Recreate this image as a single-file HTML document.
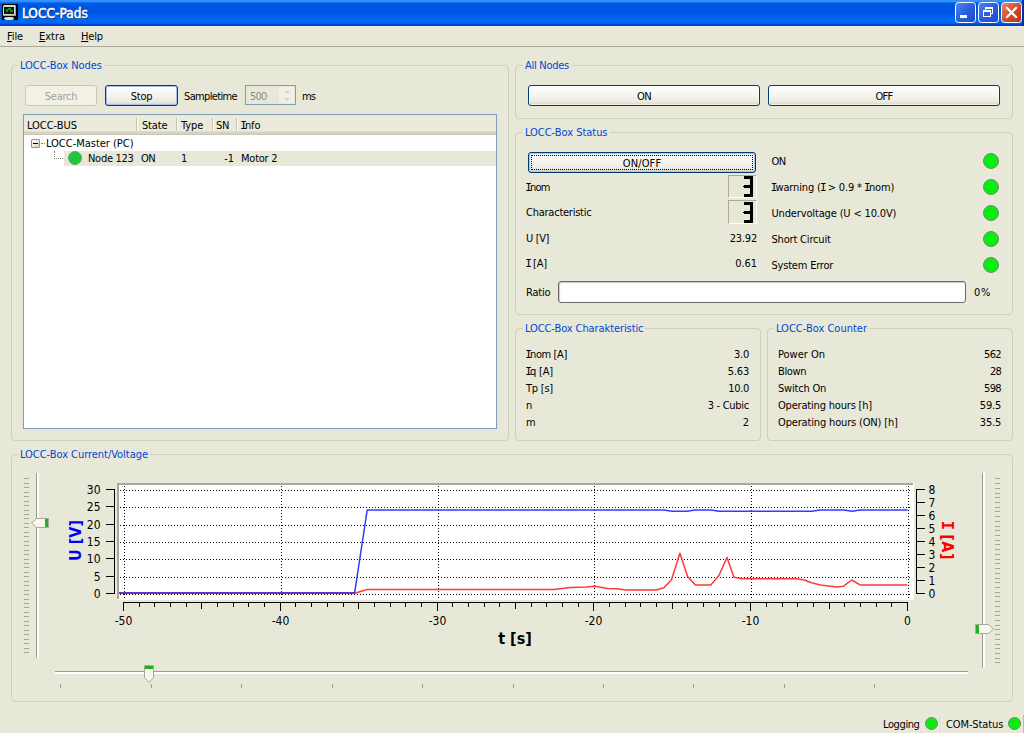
<!DOCTYPE html>
<html><head><meta charset="utf-8"><title>LOCC-Pads</title>
<style>
*{box-sizing:border-box;margin:0;padding:0}
html,body{width:1024px;height:733px;overflow:hidden}
body{background:#e8e8d8;font-family:"DejaVu Sans Condensed","DejaVu Sans","Liberation Sans",sans-serif;font-size:11px;color:#000;position:relative}
.t{position:absolute;white-space:nowrap;line-height:14px;font-size:11px}
.r{text-align:right}
#title{position:absolute;left:0;top:0;width:1024px;height:26px;background:linear-gradient(#3a8ff5 0,#3a8ff5 1.5px,#0070f5 2.5px,#0058e0 4px,#0054df 6px,#0054df 12px,#005cec 15px,#0068f5 19px,#0066f2 23px,#0048d8 24.5px,#0030c0 26px)}
#title .cap{position:absolute;left:22px;top:5px;font:13.5px "DejaVu Sans Condensed","DejaVu Sans","Liberation Sans",sans-serif;-webkit-text-stroke:0.5px #fff;color:#fff;text-shadow:1px 1px 0 #0a2a80;line-height:17px;white-space:nowrap}
.tb{position:absolute;top:2px;width:21px;height:21px;border:1px solid #fff;border-radius:3.5px;background:linear-gradient(135deg,#4f84ee,#2a5ee0 50%,#1c4cc8)}
.tb.x{background:linear-gradient(135deg,#ea8468,#d2492a 55%,#b83218)}
#menu{position:absolute;left:0;top:26px;width:1024px;height:21px;border-top:1px solid #f3f0dc;border-bottom:1px solid #aca899}
.gb{position:absolute;border:1px solid #d0d0bf;border-radius:4px}
.gl{position:absolute;background:#e8e8d8;color:#0046d5;padding:0 2px;white-space:nowrap;font-size:11px;line-height:14px}
.btn{position:absolute;border:1px solid #003c74;border-radius:3px;background:linear-gradient(#fff,#f4f3ee 50%,#ebe8dc 85%,#d6d0c5);font-size:11px;line-height:14px;box-shadow:inset 0 0 0 1px rgba(255,255,255,.6)}
.btn span{position:absolute;left:0;right:0;top:4px;text-align:center;white-space:nowrap}
.btn.dis{border-color:#c9c7ba;color:#a3a196;background:#f3f1e6;box-shadow:none}
.btn.def{box-shadow:inset 0 0 0 1px #a8c0f0}
.led{position:absolute;width:16px;height:16px;border-radius:50%;background:#08ee10;border:1px solid #6f8a62}
</style></head><body>
<div id="title"><div style="position:absolute;left:2px;top:4px;width:16px;height:16px;background:#000"></div><div style="position:absolute;left:3px;top:5px;width:13px;height:11px;background:#d8d8c8;border-radius:1.5px;box-shadow:inset -1px -1px 0 #a8a898"></div><div style="position:absolute;left:4px;top:7px;width:10px;height:7px;background:#04200a"></div><div style="position:absolute;left:6px;top:9px;width:2px;height:3px;background:#168a2a"></div><div style="position:absolute;left:8px;top:8px;width:3px;height:2px;background:#168a2a"></div><div style="position:absolute;left:10px;top:10px;width:3px;height:2px;background:#168a2a"></div><div style="position:absolute;left:4px;top:17px;width:10px;height:2.5px;background:#e4e4d4;border-radius:50%"></div><div class="cap" style="letter-spacing:0.07px;">LOCC-Pads</div>
<div class="tb" style="left:955px"><div style="position:absolute;left:4px;top:12px;width:7px;height:3px;background:#fff"></div></div><div class="tb" style="left:978px"><div style="position:absolute;left:6px;top:4px;width:8px;height:7px;border:1px solid #fff;border-top-width:2px"></div><div style="position:absolute;left:4px;top:7px;width:8px;height:7px;border:1px solid #fff;border-top-width:2px;background:#2a5ee0"></div></div><div class="tb x" style="left:1001px"><svg width="19" height="19" style="position:absolute;left:0;top:0"><path d="M5 5 L14 14 M14 5 L5 14" stroke="#fff" stroke-width="2.2" stroke-linecap="square"/></svg></div><div style="position:absolute;left:1022px;top:0;width:2px;height:26px;background:#0030b0"></div></div>
<div id="menu"></div>
<div class="t" style="left:7px;top:30px;letter-spacing:-0.12px;"><u>F</u>ile</div>
<div class="t" style="left:39px;top:30px;letter-spacing:-0.03px;"><u>E</u>xtra</div>
<div class="t" style="left:81px;top:30px;letter-spacing:-0.14px;"><u>H</u>elp</div>
<div class="gb" style="left:11px;top:65px;width:498px;height:376px"></div><div class="gl" style="left:18px;top:59px;letter-spacing:-0.03px;">LOCC-Box Nodes</div>
<div class="gb" style="left:515px;top:65px;width:498px;height:54px"></div><div class="gl" style="left:523px;top:59px;letter-spacing:-0.27px;">All Nodes</div>
<div class="gb" style="left:515px;top:132px;width:498px;height:183px"></div><div class="gl" style="left:523px;top:126px;letter-spacing:-0.03px;">LOCC-Box Status</div>
<div class="gb" style="left:515px;top:328px;width:246px;height:113px"></div><div class="gl" style="left:523px;top:322px;letter-spacing:-0.09px;">LOCC-Box Charakteristic</div>
<div class="gb" style="left:767px;top:328px;width:246px;height:113px"></div><div class="gl" style="left:774px;top:322px;letter-spacing:0.00px;">LOCC-Box Counter</div>
<div class="gb" style="left:11px;top:454px;width:1002px;height:248px"></div><div class="gl" style="left:18px;top:448px;letter-spacing:-0.04px;">LOCC-Box Current/Voltage</div>
<div class="btn dis" style="left:25px;top:85px;width:72px;height:21px"><span style="letter-spacing:-0.25px;">Search</span></div>
<div class="btn def" style="left:105px;top:85px;width:73px;height:21px"><span style="letter-spacing:-0.25px;">Stop</span></div>
<div class="t" style="left:184px;top:90px;letter-spacing:-0.65px;">Sampletime</div>
<div style="position:absolute;left:245px;top:85px;width:51px;height:20px;border:1px solid #7f9db9;background:#e8e8d8"></div><div class="t" style="left:250px;top:90px;letter-spacing:-0.80px;color:#8e8c80">500</div>
<div style="position:absolute;left:279px;top:87px;width:15px;height:16px;background:#f1efe6"></div><div style="position:absolute;left:284px;top:90px;border:3px solid transparent;border-top:0;border-bottom:3px solid #d4d2c6;width:0;height:0"></div><div style="position:absolute;left:284px;top:98px;border:3px solid transparent;border-bottom:0;border-top:3px solid #d4d2c6;width:0;height:0"></div>
<div class="t" style="left:302px;top:90px;letter-spacing:-0.90px;">ms</div>
<div style="position:absolute;left:23px;top:114px;width:474px;height:315px;border:1px solid #7f9db9;background:#fff"></div>
<div style="position:absolute;left:24px;top:115px;width:472px;height:20px;background:#ebeadb;border-bottom:1px solid #cbc7b8;box-shadow:inset 0 -2px 0 #d6d2c2,inset 0 -3px 0 #e2dece"></div>
<div style="position:absolute;left:136px;top:118px;width:1px;height:13px;background:#c5c2b2"></div><div style="position:absolute;left:137px;top:118px;width:1px;height:13px;background:#fff"></div><div style="position:absolute;left:176px;top:118px;width:1px;height:13px;background:#c5c2b2"></div><div style="position:absolute;left:177px;top:118px;width:1px;height:13px;background:#fff"></div><div style="position:absolute;left:212px;top:118px;width:1px;height:13px;background:#c5c2b2"></div><div style="position:absolute;left:213px;top:118px;width:1px;height:13px;background:#fff"></div><div style="position:absolute;left:236px;top:118px;width:1px;height:13px;background:#c5c2b2"></div><div style="position:absolute;left:237px;top:118px;width:1px;height:13px;background:#fff"></div>
<div class="t" style="left:27px;top:119px;letter-spacing:-0.03px;">LOCC-BUS</div>
<div class="t" style="left:142px;top:119px;letter-spacing:-0.16px;">State</div>
<div class="t" style="left:181px;top:119px;letter-spacing:-0.04px;">Type</div>
<div class="t" style="left:216px;top:119px;letter-spacing:-0.34px;">SN</div>
<div class="t" style="left:241px;top:119px;letter-spacing:-0.18px;"><span style="font-family:'DejaVu Sans Mono',monospace;letter-spacing:-1.8px;margin-left:-0.8px">I</span>nfo</div>
<div style="position:absolute;left:64px;top:151px;width:432px;height:15px;background:#e8e8d8"></div>
<div style="position:absolute;left:31px;top:139px;width:9px;height:9px;border:1px solid #7898b5;border-radius:1px;background:linear-gradient(135deg,#fff,#d8d4c4)"></div><div style="position:absolute;left:33px;top:143px;width:5px;height:1px;background:#000"></div>
<div style="position:absolute;left:41px;top:143px;width:4px;height:0;border-top:1px dotted #808080"></div><div style="position:absolute;left:54px;top:151px;width:0;height:8px;border-left:1px dotted #808080"></div><div style="position:absolute;left:54px;top:158px;width:9px;height:0;border-top:1px dotted #808080"></div>
<div style="position:absolute;left:68px;top:151px;width:14px;height:14px;border-radius:50%;background:#1cc83c;border:1px solid #6aa078"></div>
<div class="t" style="left:46px;top:137px;letter-spacing:-0.02px;">LOCC-Master (PC)</div>
<div class="t" style="left:88px;top:152px;letter-spacing:-0.28px;">Node 123</div>
<div class="t" style="left:141px;top:152px;letter-spacing:-0.60px;">ON</div>
<div class="t" style="left:181px;top:152px;">1</div>
<div class="t r" style="left:114px;width:120px;top:152px;">-1</div>
<div class="t" style="left:241px;top:152px;letter-spacing:-0.23px;">Motor 2</div>
<div class="btn " style="left:528px;top:85px;width:232px;height:21px"><span style="letter-spacing:-0.60px;">ON</span></div>
<div class="btn " style="left:768px;top:85px;width:232px;height:21px"><span style="letter-spacing:-0.73px;">OFF</span></div>
<div class="btn def" style="left:528px;top:152px;width:228px;height:21px"><span style="letter-spacing:0.15px;">ON/OFF</span><div style="position:absolute;left:2px;top:2px;right:2px;bottom:2px;border:1px dotted #000"></div></div>
<div class="t" style="left:526px;top:181px;letter-spacing:-0.80px;"><span style="font-family:'DejaVu Sans Mono',monospace;letter-spacing:-1.8px;margin-left:-0.8px">I</span>nom</div>
<div class="t" style="left:526px;top:206px;letter-spacing:-0.24px;">Characteristic</div>
<div class="t" style="left:526px;top:232px;letter-spacing:-0.36px;">U [V]</div>
<div class="t" style="left:526px;top:257px;letter-spacing:-0.17px;"><span style="font-family:'DejaVu Sans Mono',monospace;letter-spacing:-1.8px;margin-left:-0.8px">I</span> [A]</div>
<div class="t" style="left:526px;top:286px;letter-spacing:-0.20px;">Ratio</div>
<div class="t r" style="left:637px;width:120px;top:232px;letter-spacing:-0.19px;">23.92</div>
<div class="t r" style="left:637px;width:120px;top:257px;letter-spacing:-0.06px;">0.61</div>
<div class="t" style="left:771.5px;top:155px;letter-spacing:-0.60px;">ON</div>
<div class="led" style="left:983px;top:153px"></div>
<div class="t" style="left:771.5px;top:181px;letter-spacing:-0.16px;"><span style="font-family:'DejaVu Sans Mono',monospace;letter-spacing:-1.8px;margin-left:-0.8px">I</span>warning (<span style="font-family:'DejaVu Sans Mono',monospace;letter-spacing:-1.8px;margin-left:-0.8px">I</span> &gt; 0.9 * <span style="font-family:'DejaVu Sans Mono',monospace;letter-spacing:-1.8px;margin-left:-0.8px">I</span>nom)</div>
<div class="led" style="left:983px;top:179px"></div>
<div class="t" style="left:771.5px;top:207px;letter-spacing:-0.15px;">Undervoltage (U &lt; 10.0V)</div>
<div class="led" style="left:983px;top:205px"></div>
<div class="t" style="left:771.5px;top:233px;letter-spacing:-0.18px;">Short Circuit</div>
<div class="led" style="left:983px;top:231px"></div>
<div class="t" style="left:771.5px;top:259px;letter-spacing:-0.20px;">System Error</div>
<div class="led" style="left:983px;top:257px"></div>
<div style="position:absolute;left:728px;top:175px;width:29px;height:23px;border:1px solid;border-color:#aca899 #fff #fff #aca899"></div><div style="position:absolute;left:743.5px;top:176px;width:9.5px;height:2.6px;background:#000"></div><div style="position:absolute;left:750.4px;top:176px;width:2.6px;height:21px;background:#000"></div><div style="position:absolute;left:744px;top:185.2px;width:7px;height:2.6px;background:#000"></div><div style="position:absolute;left:743.5px;top:194.4px;width:9.5px;height:2.6px;background:#000"></div><div style="position:absolute;left:742.6px;top:186px;width:2px;height:1px;background:#000"></div>
<div style="position:absolute;left:728px;top:200px;width:29px;height:24px;border:1px solid;border-color:#aca899 #fff #fff #aca899"></div><div style="position:absolute;left:743.5px;top:202px;width:9.5px;height:2.6px;background:#000"></div><div style="position:absolute;left:750.4px;top:202px;width:2.6px;height:21px;background:#000"></div><div style="position:absolute;left:744px;top:211.2px;width:7px;height:2.6px;background:#000"></div><div style="position:absolute;left:743.5px;top:220.4px;width:9.5px;height:2.6px;background:#000"></div><div style="position:absolute;left:742.6px;top:212px;width:2px;height:1px;background:#000"></div>
<div style="position:absolute;left:558px;top:281px;width:408px;height:22px;border:1px solid #686868;border-radius:3px;background:#fff;box-shadow:inset 1px 1px 1px #c8c8c8"></div>
<div class="t" style="left:974px;top:286px;letter-spacing:0.65px;">0%</div>
<div class="t" style="left:526px;top:348px;letter-spacing:-0.38px;"><span style="font-family:'DejaVu Sans Mono',monospace;letter-spacing:-1.8px;margin-left:-0.8px">I</span>nom [A]</div>
<div class="t r" style="left:629px;width:120px;top:348px;letter-spacing:-0.24px;">3.0</div>
<div class="t" style="left:526px;top:365px;letter-spacing:-0.19px;"><span style="font-family:'DejaVu Sans Mono',monospace;letter-spacing:-1.8px;margin-left:-0.8px">I</span>q [A]</div>
<div class="t r" style="left:629px;width:120px;top:365px;letter-spacing:-0.18px;">5.63</div>
<div class="t" style="left:526px;top:382px;letter-spacing:-0.23px;">Tp [s]</div>
<div class="t r" style="left:629px;width:120px;top:382px;letter-spacing:-0.31px;">10.0</div>
<div class="t" style="left:526px;top:399px;">n</div>
<div class="t r" style="left:629px;width:120px;top:399px;letter-spacing:-0.28px;">3 - Cubic</div>
<div class="t" style="left:526px;top:416px;">m</div>
<div class="t r" style="left:629px;width:120px;top:416px;">2</div>
<div class="t" style="left:778px;top:348px;letter-spacing:-0.02px;">Power On</div>
<div class="t r" style="left:881px;width:120px;top:348px;letter-spacing:-0.63px;">562</div>
<div class="t" style="left:778px;top:365px;letter-spacing:-0.37px;">Blown</div>
<div class="t r" style="left:881px;width:120px;top:365px;letter-spacing:-0.80px;">28</div>
<div class="t" style="left:778px;top:382px;letter-spacing:-0.20px;">Switch On</div>
<div class="t r" style="left:881px;width:120px;top:382px;letter-spacing:-0.63px;">598</div>
<div class="t" style="left:778px;top:399px;letter-spacing:-0.19px;">Operating hours [h]</div>
<div class="t r" style="left:881px;width:120px;top:399px;letter-spacing:-0.21px;">59.5</div>
<div class="t" style="left:778px;top:416px;letter-spacing:-0.16px;">Operating hours (ON) [h]</div>
<div class="t r" style="left:881px;width:120px;top:416px;letter-spacing:-0.21px;">35.5</div>
<div class="t" style="left:883px;top:718px;letter-spacing:-0.39px;">Logging</div>
<div class="led" style="left:925px;top:717px;width:13px;height:13px"></div><div style="position:absolute;left:940px;top:715px;width:1px;height:18px;background:#dcdac8"></div><div style="position:absolute;left:941px;top:715px;width:1px;height:18px;background:#f4f3e8"></div><div class="t" style="left:946px;top:718px;letter-spacing:-0.11px;">COM-Status</div>
<div class="led" style="left:1008px;top:717px;width:13px;height:13px"></div><div style="position:absolute;left:1023px;top:715px;width:1px;height:18px;background:#c0b8a8"></div>
<svg width="1024" height="733" viewBox="0 0 1024 733" style="position:absolute;left:0;top:0" shape-rendering="crispEdges">
<rect x="117" y="483" width="797" height="117" fill="#fff"/><rect x="117" y="483" width="796" height="2" fill="#aca899"/><rect x="117" y="483" width="2" height="116" fill="#aca899"/>
<line x1="124.5" y1="486" x2="124.5" y2="598" stroke="#000" stroke-width="1" stroke-dasharray="1 2"/><line x1="281.5" y1="486" x2="281.5" y2="598" stroke="#000" stroke-width="1" stroke-dasharray="1 2"/><line x1="438.5" y1="486" x2="438.5" y2="598" stroke="#000" stroke-width="1" stroke-dasharray="1 2"/><line x1="594.5" y1="486" x2="594.5" y2="598" stroke="#000" stroke-width="1" stroke-dasharray="1 2"/><line x1="751.5" y1="486" x2="751.5" y2="598" stroke="#000" stroke-width="1" stroke-dasharray="1 2"/><line x1="908.5" y1="486" x2="908.5" y2="598" stroke="#000" stroke-width="1" stroke-dasharray="1 2"/>
<line x1="120" y1="594.5" x2="912" y2="594.5" stroke="#000" stroke-width="1" stroke-dasharray="1 2"/><line x1="120" y1="577.5" x2="912" y2="577.5" stroke="#000" stroke-width="1" stroke-dasharray="1 2"/><line x1="120" y1="559.5" x2="912" y2="559.5" stroke="#000" stroke-width="1" stroke-dasharray="1 2"/><line x1="120" y1="542.5" x2="912" y2="542.5" stroke="#000" stroke-width="1" stroke-dasharray="1 2"/><line x1="120" y1="525.5" x2="912" y2="525.5" stroke="#000" stroke-width="1" stroke-dasharray="1 2"/><line x1="120" y1="507.5" x2="912" y2="507.5" stroke="#000" stroke-width="1" stroke-dasharray="1 2"/><line x1="120" y1="490.5" x2="912" y2="490.5" stroke="#000" stroke-width="1" stroke-dasharray="1 2"/>
<line x1="114.5" y1="489" x2="114.5" y2="594" stroke="#000"/><line x1="106" y1="593.5" x2="115" y2="593.5" stroke="#000"/><text x="100.5" y="597.5" text-anchor="end" font-family="DejaVu Sans Condensed, DejaVu Sans, Liberation Sans, sans-serif" font-size="12">0</text><line x1="106" y1="576.5" x2="115" y2="576.5" stroke="#000"/><text x="100.5" y="580.5" text-anchor="end" font-family="DejaVu Sans Condensed, DejaVu Sans, Liberation Sans, sans-serif" font-size="12">5</text><line x1="106" y1="558.5" x2="115" y2="558.5" stroke="#000"/><text x="100.5" y="562.5" text-anchor="end" font-family="DejaVu Sans Condensed, DejaVu Sans, Liberation Sans, sans-serif" font-size="12">10</text><line x1="106" y1="541.5" x2="115" y2="541.5" stroke="#000"/><text x="100.5" y="545.5" text-anchor="end" font-family="DejaVu Sans Condensed, DejaVu Sans, Liberation Sans, sans-serif" font-size="12">15</text><line x1="106" y1="524.5" x2="115" y2="524.5" stroke="#000"/><text x="100.5" y="528.5" text-anchor="end" font-family="DejaVu Sans Condensed, DejaVu Sans, Liberation Sans, sans-serif" font-size="12">20</text><line x1="106" y1="506.5" x2="115" y2="506.5" stroke="#000"/><text x="100.5" y="510.5" text-anchor="end" font-family="DejaVu Sans Condensed, DejaVu Sans, Liberation Sans, sans-serif" font-size="12">25</text><line x1="106" y1="489.5" x2="115" y2="489.5" stroke="#000"/><text x="100.5" y="493.5" text-anchor="end" font-family="DejaVu Sans Condensed, DejaVu Sans, Liberation Sans, sans-serif" font-size="12">30</text>
<line x1="916.5" y1="489" x2="916.5" y2="594" stroke="#000"/><line x1="916" y1="593.5" x2="925" y2="593.5" stroke="#000"/><text x="928.5" y="597.5" font-family="DejaVu Sans Condensed, DejaVu Sans, Liberation Sans, sans-serif" font-size="12">0</text><line x1="916" y1="580.5" x2="925" y2="580.5" stroke="#000"/><text x="928.5" y="584.5" font-family="DejaVu Sans Condensed, DejaVu Sans, Liberation Sans, sans-serif" font-size="12">1</text><line x1="916" y1="567.5" x2="925" y2="567.5" stroke="#000"/><text x="928.5" y="571.5" font-family="DejaVu Sans Condensed, DejaVu Sans, Liberation Sans, sans-serif" font-size="12">2</text><line x1="916" y1="554.5" x2="925" y2="554.5" stroke="#000"/><text x="928.5" y="558.5" font-family="DejaVu Sans Condensed, DejaVu Sans, Liberation Sans, sans-serif" font-size="12">3</text><line x1="916" y1="541.5" x2="925" y2="541.5" stroke="#000"/><text x="928.5" y="545.5" font-family="DejaVu Sans Condensed, DejaVu Sans, Liberation Sans, sans-serif" font-size="12">4</text><line x1="916" y1="528.5" x2="925" y2="528.5" stroke="#000"/><text x="928.5" y="532.5" font-family="DejaVu Sans Condensed, DejaVu Sans, Liberation Sans, sans-serif" font-size="12">5</text><line x1="916" y1="515.5" x2="925" y2="515.5" stroke="#000"/><text x="928.5" y="519.5" font-family="DejaVu Sans Condensed, DejaVu Sans, Liberation Sans, sans-serif" font-size="12">6</text><line x1="916" y1="502.5" x2="925" y2="502.5" stroke="#000"/><text x="928.5" y="506.5" font-family="DejaVu Sans Condensed, DejaVu Sans, Liberation Sans, sans-serif" font-size="12">7</text><line x1="916" y1="489.5" x2="925" y2="489.5" stroke="#000"/><text x="928.5" y="493.5" font-family="DejaVu Sans Condensed, DejaVu Sans, Liberation Sans, sans-serif" font-size="12">8</text>
<line x1="123" y1="602.5" x2="908" y2="602.5" stroke="#000"/><line x1="123.5" y1="602" x2="123.5" y2="611" stroke="#000"/><line x1="139.5" y1="602" x2="139.5" y2="607" stroke="#000"/><line x1="154.5" y1="602" x2="154.5" y2="607" stroke="#000"/><line x1="170.5" y1="602" x2="170.5" y2="607" stroke="#000"/><line x1="186.5" y1="602" x2="186.5" y2="607" stroke="#000"/><line x1="201.5" y1="602" x2="201.5" y2="609" stroke="#000"/><line x1="217.5" y1="602" x2="217.5" y2="607" stroke="#000"/><line x1="233.5" y1="602" x2="233.5" y2="607" stroke="#000"/><line x1="248.5" y1="602" x2="248.5" y2="607" stroke="#000"/><line x1="264.5" y1="602" x2="264.5" y2="607" stroke="#000"/><line x1="280.5" y1="602" x2="280.5" y2="611" stroke="#000"/><line x1="295.5" y1="602" x2="295.5" y2="607" stroke="#000"/><line x1="311.5" y1="602" x2="311.5" y2="607" stroke="#000"/><line x1="327.5" y1="602" x2="327.5" y2="607" stroke="#000"/><line x1="343.5" y1="602" x2="343.5" y2="607" stroke="#000"/><line x1="358.5" y1="602" x2="358.5" y2="609" stroke="#000"/><line x1="374.5" y1="602" x2="374.5" y2="607" stroke="#000"/><line x1="390.5" y1="602" x2="390.5" y2="607" stroke="#000"/><line x1="405.5" y1="602" x2="405.5" y2="607" stroke="#000"/><line x1="421.5" y1="602" x2="421.5" y2="607" stroke="#000"/><line x1="437.5" y1="602" x2="437.5" y2="611" stroke="#000"/><line x1="452.5" y1="602" x2="452.5" y2="607" stroke="#000"/><line x1="468.5" y1="602" x2="468.5" y2="607" stroke="#000"/><line x1="484.5" y1="602" x2="484.5" y2="607" stroke="#000"/><line x1="499.5" y1="602" x2="499.5" y2="607" stroke="#000"/><line x1="515.5" y1="602" x2="515.5" y2="609" stroke="#000"/><line x1="531.5" y1="602" x2="531.5" y2="607" stroke="#000"/><line x1="546.5" y1="602" x2="546.5" y2="607" stroke="#000"/><line x1="562.5" y1="602" x2="562.5" y2="607" stroke="#000"/><line x1="578.5" y1="602" x2="578.5" y2="607" stroke="#000"/><line x1="593.5" y1="602" x2="593.5" y2="611" stroke="#000"/><line x1="609.5" y1="602" x2="609.5" y2="607" stroke="#000"/><line x1="625.5" y1="602" x2="625.5" y2="607" stroke="#000"/><line x1="640.5" y1="602" x2="640.5" y2="607" stroke="#000"/><line x1="656.5" y1="602" x2="656.5" y2="607" stroke="#000"/><line x1="672.5" y1="602" x2="672.5" y2="609" stroke="#000"/><line x1="687.5" y1="602" x2="687.5" y2="607" stroke="#000"/><line x1="703.5" y1="602" x2="703.5" y2="607" stroke="#000"/><line x1="719.5" y1="602" x2="719.5" y2="607" stroke="#000"/><line x1="735.5" y1="602" x2="735.5" y2="607" stroke="#000"/><line x1="750.5" y1="602" x2="750.5" y2="611" stroke="#000"/><line x1="766.5" y1="602" x2="766.5" y2="607" stroke="#000"/><line x1="782.5" y1="602" x2="782.5" y2="607" stroke="#000"/><line x1="797.5" y1="602" x2="797.5" y2="607" stroke="#000"/><line x1="813.5" y1="602" x2="813.5" y2="607" stroke="#000"/><line x1="829.5" y1="602" x2="829.5" y2="609" stroke="#000"/><line x1="844.5" y1="602" x2="844.5" y2="607" stroke="#000"/><line x1="860.5" y1="602" x2="860.5" y2="607" stroke="#000"/><line x1="876.5" y1="602" x2="876.5" y2="607" stroke="#000"/><line x1="891.5" y1="602" x2="891.5" y2="607" stroke="#000"/><line x1="907.5" y1="602" x2="907.5" y2="611" stroke="#000"/>
<text x="123.5" y="625" text-anchor="middle" font-family="DejaVu Sans Condensed, DejaVu Sans, Liberation Sans, sans-serif" font-size="12">-50</text><text x="280.5" y="625" text-anchor="middle" font-family="DejaVu Sans Condensed, DejaVu Sans, Liberation Sans, sans-serif" font-size="12">-40</text><text x="437.5" y="625" text-anchor="middle" font-family="DejaVu Sans Condensed, DejaVu Sans, Liberation Sans, sans-serif" font-size="12">-30</text><text x="593.5" y="625" text-anchor="middle" font-family="DejaVu Sans Condensed, DejaVu Sans, Liberation Sans, sans-serif" font-size="12">-20</text><text x="750.5" y="625" text-anchor="middle" font-family="DejaVu Sans Condensed, DejaVu Sans, Liberation Sans, sans-serif" font-size="12">-10</text><text x="907.5" y="625" text-anchor="middle" font-family="DejaVu Sans Condensed, DejaVu Sans, Liberation Sans, sans-serif" font-size="12">0</text>
<text x="515" y="644" text-anchor="middle" font-family="DejaVu Sans Condensed, DejaVu Sans, Liberation Sans, sans-serif" font-size="16" font-weight="bold">t [s]</text>
<text transform="translate(80.7,540.5) rotate(-90)" text-anchor="middle" font-family="DejaVu Sans Condensed, DejaVu Sans, Liberation Sans, sans-serif" font-size="16" font-weight="bold" fill="#0000ff">U [V]</text>
<text transform="translate(942.3,540.5) rotate(90)" text-anchor="middle" font-family="DejaVu Sans Condensed, DejaVu Sans, Liberation Sans, sans-serif" font-size="16" font-weight="bold" fill="#ff0000" letter-spacing="0.6"><tspan font-family="DejaVu Sans Mono, monospace" font-size="15.5" letter-spacing="-1.5">I</tspan> [A]</text>
<polyline fill="none" stroke="#ff3838" stroke-width="1.5" stroke-linejoin="round" shape-rendering="auto" points="119,593.2 354.6,593.2 367.2,589.5 554,589.5 570,587.5 586,587.1 594.8,586.2 607.7,588.4 617.4,588.8 625.4,590 656,590 664,587.8 671.5,579.7 679.9,553.3 687.6,576.5 695.4,584.9 710.8,584.9 718.9,575.5 727,557.5 734,577.2 742.1,578.8 796.2,578.8 804.3,580 812.4,583 820.4,584.9 836.5,587.1 843.6,586.2 851.7,580 860,584.9 907.4,584.9"/>
<polyline fill="none" stroke="#3838ff" stroke-width="1.5" stroke-linejoin="round" shape-rendering="auto" points="119,593.2 354.6,593.2 367.2,510 664,510 672,511.3 687,511.3 695,510 711,510 719,511.3 812,511.3 820,510 844,510 852,511.3 860,510 907.6,510"/>
<rect x="119" y="592.3" width="235" height="1.8" fill="#6a30c8"/>
<rect x="36" y="473" width="1" height="185" fill="#9d9c8f"/><rect x="37" y="473" width="2" height="185" fill="#fff"/><rect x="24" y="478" width="5" height="1" fill="#a6a598"/><rect x="24" y="483" width="5" height="1" fill="#a6a598"/><rect x="24" y="487" width="5" height="1" fill="#a6a598"/><rect x="24" y="492" width="5" height="1" fill="#a6a598"/><rect x="24" y="496" width="5" height="1" fill="#a6a598"/><rect x="24" y="501" width="5" height="1" fill="#a6a598"/><rect x="24" y="505" width="5" height="1" fill="#a6a598"/><rect x="24" y="510" width="5" height="1" fill="#a6a598"/><rect x="24" y="514" width="5" height="1" fill="#a6a598"/><rect x="24" y="518" width="5" height="1" fill="#a6a598"/><rect x="24" y="523" width="5" height="1" fill="#a6a598"/><rect x="24" y="527" width="5" height="1" fill="#a6a598"/><rect x="24" y="532" width="5" height="1" fill="#a6a598"/><rect x="24" y="536" width="5" height="1" fill="#a6a598"/><rect x="24" y="541" width="5" height="1" fill="#a6a598"/><rect x="24" y="545" width="5" height="1" fill="#a6a598"/><rect x="24" y="550" width="5" height="1" fill="#a6a598"/><rect x="24" y="554" width="5" height="1" fill="#a6a598"/><rect x="24" y="559" width="5" height="1" fill="#a6a598"/><rect x="24" y="563" width="5" height="1" fill="#a6a598"/><rect x="24" y="567" width="5" height="1" fill="#a6a598"/><rect x="24" y="572" width="5" height="1" fill="#a6a598"/><rect x="24" y="576" width="5" height="1" fill="#a6a598"/><rect x="24" y="581" width="5" height="1" fill="#a6a598"/><rect x="24" y="585" width="5" height="1" fill="#a6a598"/><rect x="24" y="590" width="5" height="1" fill="#a6a598"/><rect x="24" y="594" width="5" height="1" fill="#a6a598"/><rect x="24" y="599" width="5" height="1" fill="#a6a598"/><rect x="24" y="603" width="5" height="1" fill="#a6a598"/><rect x="24" y="607" width="5" height="1" fill="#a6a598"/><rect x="24" y="612" width="5" height="1" fill="#a6a598"/><rect x="24" y="616" width="5" height="1" fill="#a6a598"/><rect x="24" y="621" width="5" height="1" fill="#a6a598"/><rect x="24" y="625" width="5" height="1" fill="#a6a598"/><rect x="24" y="630" width="5" height="1" fill="#a6a598"/><rect x="24" y="634" width="5" height="1" fill="#a6a598"/><rect x="24" y="639" width="5" height="1" fill="#a6a598"/><rect x="24" y="643" width="5" height="1" fill="#a6a598"/><rect x="24" y="648" width="5" height="1" fill="#a6a598"/><rect x="24" y="652" width="5" height="1" fill="#a6a598"/>
<rect x="982" y="473" width="1" height="195" fill="#9d9c8f"/><rect x="983" y="473" width="2" height="195" fill="#fff"/><rect x="995" y="478" width="5" height="1" fill="#a6a598"/><rect x="995" y="483" width="5" height="1" fill="#a6a598"/><rect x="995" y="488" width="5" height="1" fill="#a6a598"/><rect x="995" y="493" width="5" height="1" fill="#a6a598"/><rect x="995" y="497" width="5" height="1" fill="#a6a598"/><rect x="995" y="502" width="5" height="1" fill="#a6a598"/><rect x="995" y="507" width="5" height="1" fill="#a6a598"/><rect x="995" y="511" width="5" height="1" fill="#a6a598"/><rect x="995" y="516" width="5" height="1" fill="#a6a598"/><rect x="995" y="521" width="5" height="1" fill="#a6a598"/><rect x="995" y="526" width="5" height="1" fill="#a6a598"/><rect x="995" y="530" width="5" height="1" fill="#a6a598"/><rect x="995" y="535" width="5" height="1" fill="#a6a598"/><rect x="995" y="540" width="5" height="1" fill="#a6a598"/><rect x="995" y="544" width="5" height="1" fill="#a6a598"/><rect x="995" y="549" width="5" height="1" fill="#a6a598"/><rect x="995" y="554" width="5" height="1" fill="#a6a598"/><rect x="995" y="559" width="5" height="1" fill="#a6a598"/><rect x="995" y="563" width="5" height="1" fill="#a6a598"/><rect x="995" y="568" width="5" height="1" fill="#a6a598"/><rect x="995" y="573" width="5" height="1" fill="#a6a598"/><rect x="995" y="578" width="5" height="1" fill="#a6a598"/><rect x="995" y="582" width="5" height="1" fill="#a6a598"/><rect x="995" y="587" width="5" height="1" fill="#a6a598"/><rect x="995" y="592" width="5" height="1" fill="#a6a598"/><rect x="995" y="596" width="5" height="1" fill="#a6a598"/><rect x="995" y="601" width="5" height="1" fill="#a6a598"/><rect x="995" y="606" width="5" height="1" fill="#a6a598"/><rect x="995" y="611" width="5" height="1" fill="#a6a598"/><rect x="995" y="615" width="5" height="1" fill="#a6a598"/><rect x="995" y="620" width="5" height="1" fill="#a6a598"/><rect x="995" y="625" width="5" height="1" fill="#a6a598"/><rect x="995" y="629" width="5" height="1" fill="#a6a598"/><rect x="995" y="634" width="5" height="1" fill="#a6a598"/><rect x="995" y="639" width="5" height="1" fill="#a6a598"/><rect x="995" y="644" width="5" height="1" fill="#a6a598"/><rect x="995" y="648" width="5" height="1" fill="#a6a598"/><rect x="995" y="653" width="5" height="1" fill="#a6a598"/><rect x="995" y="658" width="5" height="1" fill="#a6a598"/><rect x="995" y="662" width="5" height="1" fill="#a6a598"/>
<rect x="55" y="671" width="913" height="1" fill="#9d9c8f"/><rect x="55" y="672" width="913" height="2" fill="#fff"/><rect x="60" y="684" width="1" height="4" fill="#9d9c8f"/><rect x="151" y="684" width="1" height="4" fill="#9d9c8f"/><rect x="241" y="684" width="1" height="4" fill="#9d9c8f"/><rect x="332" y="684" width="1" height="4" fill="#9d9c8f"/><rect x="422" y="684" width="1" height="4" fill="#9d9c8f"/><rect x="513" y="684" width="1" height="4" fill="#9d9c8f"/><rect x="603" y="684" width="1" height="4" fill="#9d9c8f"/><rect x="693" y="684" width="1" height="4" fill="#9d9c8f"/><rect x="784" y="684" width="1" height="4" fill="#9d9c8f"/><rect x="874" y="684" width="1" height="4" fill="#9d9c8f"/>
<g shape-rendering="auto"><path d="M31.5 523 L36.5 518.5 H48.5 V527.5 H36.5 Z" fill="#f6f5ee" stroke="#a8a898" stroke-width="1"/><rect x="45" y="519" width="3" height="8" fill="#22b022"/><path d="M993.5 629 L988.5 624.5 H975.5 V633.5 H988.5 Z" fill="#f6f5ee" stroke="#a8a898" stroke-width="1"/><rect x="976" y="625" width="3" height="8" fill="#22b022"/><path d="M149 682.5 L144.5 677.5 V665.5 H153.5 V677.5 Z" fill="#f6f5ee" stroke="#a8a898" stroke-width="1"/><rect x="145" y="666" width="8" height="3" fill="#22b022"/></g>
</svg>
</body></html>
